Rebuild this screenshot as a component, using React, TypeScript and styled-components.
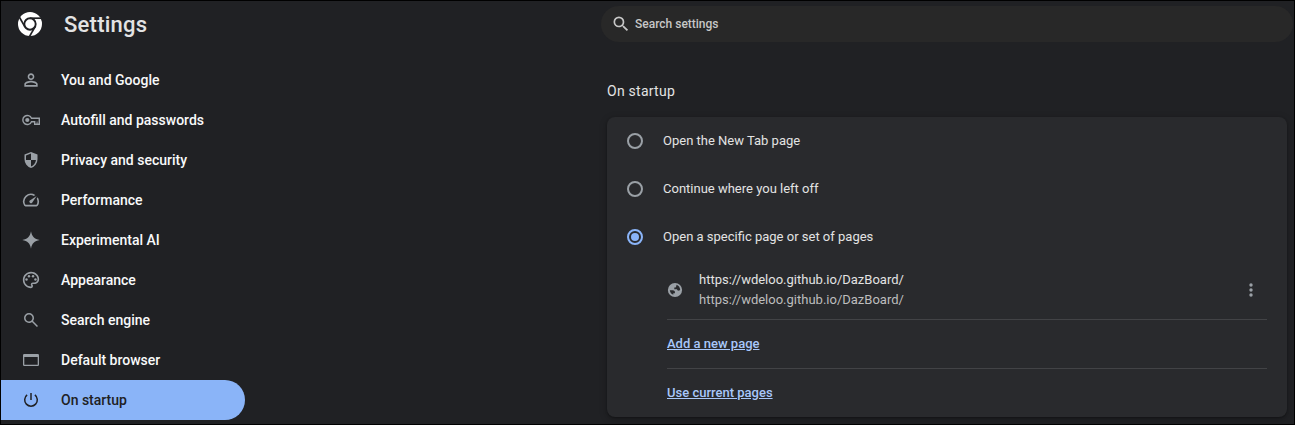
import React from "react";
import styled, { createGlobalStyle } from "styled-components";

const Global = createGlobalStyle`
  * { box-sizing: border-box; }
  body { margin: 0; background: #202124; font-family: Roboto, "Liberation Sans", sans-serif; }
`;

const Window = styled.div`
  display: flex;
  width: 1295px;
  height: 425px;
  border: 1px solid #000;
  background: #202124;
  color: #e3e3e3;
  overflow: hidden;
`;

const Sidebar = styled.aside`
  width: 266px;
  flex: none;
`;

const Brand = styled.header`
  display: flex;
  align-items: center;
  gap: 22px;
  height: 46px;
  padding-left: 17px;
  margin-bottom: 13px;
`;

const Title = styled.h1`
  margin: 0;
  padding-top: 2px;
  font-size: 22px;
  font-weight: 500;
  letter-spacing: 0.25px;
  line-height: 32px;
`;

const Nav = styled.nav`
  display: flex;
  flex-direction: column;
`;

const NavItem = styled.a<{ $active?: boolean }>`
  display: flex;
  align-items: center;
  gap: 20px;
  width: 244px;
  height: 40px;
  padding-left: 20px;
  border-radius: 0 20px 20px 0;
  font-size: 14px;
  font-weight: 500;
  color: ${(p) => (p.$active ? "#202124" : "#f8f9fa")};
  background: ${(p) => (p.$active ? "#8ab4f8" : "transparent")};
  svg { color: ${(p) => (p.$active ? "#202124" : "#9aa0a6")}; }
`;

const Icon = styled.svg<{ $size?: number }>`
  flex: none;
  display: block;
  width: ${(p) => p.$size ?? 20}px;
  height: ${(p) => p.$size ?? 20}px;
  fill: currentColor;
`;

const Main = styled.main`
  display: flex;
  flex-direction: column;
  width: 692px;
  margin-left: auto;
  margin-right: 1px;
`;

const SearchBar = styled.div`
  display: flex;
  align-items: center;
  gap: 4px;
  height: 36px;
  margin-top: 5px;
  padding-left: 10px;
  border-radius: 18px;
  background: #282828;
  color: #c7c7c7;
  font-size: 12px;
  font-weight: 500;
`;

const Section = styled.section`
  margin: 37px 6px 0;
`;

const SectionTitle = styled.h2`
  margin: 0 0 13px;
  font-size: 14px;
  font-weight: 400;
  letter-spacing: 0.25px;
  line-height: 25px;
`;

const Card = styled.div`
  height: 300px;
  border-radius: 8px;
  background: #292a2d;
  box-shadow: 0 1px 2px rgba(0, 0, 0, 0.3), 0 2px 6px 2px rgba(0, 0, 0, 0.15);
`;

const Option = styled.label`
  display: flex;
  align-items: center;
  gap: 20px;
  height: 48px;
  padding-left: 20px;
  font-size: 13px;
  color: #e3e3e3;
`;

const OptionText = styled.span`
  padding-bottom: 2px;
`;

const Radio = styled.span<{ $checked?: boolean }>`
  display: grid;
  place-items: center;
  width: 16px;
  height: 16px;
  border: 2px solid ${(p) => (p.$checked ? "#8ab4f8" : "#9aa0a6")};
  border-radius: 50%;
  &::after {
    content: "";
    width: 8px;
    height: 8px;
    border-radius: 50%;
    background: ${(p) => (p.$checked ? "#8ab4f8" : "transparent")};
  }
`;

const Pages = styled.div`
  margin: 0 20px 0 60px;
`;

const PageEntry = styled.div`
  display: flex;
  align-items: center;
  height: 58px;
  color: #9aa0a6;
`;

const PageText = styled.div`
  flex: 1;
  margin-left: 16px;
  font-size: 13px;
  line-height: 20px;
`;

const PageTitle = styled.div`
  color: #e3e3e3;
`;

const PageUrl = styled.div`
  color: #bdbdbd;
`;

const MenuButton = styled.span`
  display: flex;
  margin-right: 6px;
`;

const ActionRow = styled.div`
  display: flex;
  align-items: center;
  height: 49px;
  padding-bottom: 2px;
  border-top: 1px solid #424346;
`;

const ActionLink = styled.a`
  color: #a8c7fa;
  font-size: 13px;
  font-weight: 500;
  text-decoration: underline;
`;

const searchPath =
  "M765-144 526-383q-30 22-65.8 34.5-35.8 12.5-76.2 12.5Q284-336 214-406t-70-170q0-100 70-170t170-70q100 0 170 70t70 170q0 40.4-12.5 76.2Q599-464 577-434l239 239-51 51ZM384-408q70 0 119-49t49-119q0-70-49-119t-119-49q-70 0-119 49t-49 119q0 70 49 119t119 49Z";

const items: { label: string; viewBox?: string; art: React.ReactNode }[] = [
  {
    label: "You and Google",
    viewBox: "0 0 24 24",
    art: <path d="M12 5.9c1.16 0 2.1.94 2.1 2.1s-.94 2.1-2.1 2.1S9.9 9.16 9.9 8s.94-2.1 2.1-2.1m0 9c2.97 0 6.1 1.46 6.1 2.1v1.1H5.9V17c0-.64 3.13-2.1 6.1-2.1M12 4C9.79 4 8 5.79 8 8s1.79 4 4 4 4-1.79 4-4-1.79-4-4-4zm0 9c-2.67 0-8 1.34-8 4v3h16v-3c0-2.66-5.33-4-8-4z" />,
  },
  {
    label: "Autofill and passwords",
    art: (
      <>
        <path d="M10.5 8.3A4.500 4.500 0 1 0 10.5 11.700H13.700V14.200H18.300V8.300Z" fill="none" stroke="currentColor" strokeWidth="1.400" />
        <path d="M15.300 11.500H17V14.200H15.300Z" opacity=".5" />
        <circle cx="6.300" cy="10" r="2.100" />
      </>
    ),
  },
  {
    label: "Privacy and security",
    viewBox: "0 -960 960 960",
    art: <path d="M480-96q-135-33-223.5-152.8Q168-368.7 168-515v-229l312-120 312 120v229q0 146.3-88.5 266.2Q615-129 480-96Zm0-75q97-30 161.500-113T718-480H480v-307l-240 92v180q0 9 .5 17t1.500 18h238v309Z" />,
  },
  {
    label: "Performance",
    viewBox: "-.5 -.5 25 25",
    art: <path d="m20.38 8.57-1.23 1.85a8 8 0 0 1-.22 7.58H5.07A8 8 0 0 1 15.58 6.85l1.85-1.23A10 10 0 0 0 3.35 19a2 2 0 0 0 1.72 1h13.85a2 2 0 0 0 1.74-1 10 10 0 0 0-.27-10.44zm-9.79 6.84a2 2 0 0 0 2.83 0l5.66-8.49-8.49 5.66a2 2 0 0 0 0 2.83z" />,
  },
  {
    label: "Experimental AI",
    art: <path d="M10 1.300C10.900 6.600 13.400 9.100 18.700 10 13.400 10.900 10.900 13.400 10 18.700 9.100 13.400 6.600 10.900 1.300 10 6.600 9.100 9.100 6.600 10 1.300Z" />,
  },
  {
    label: "Appearance",
    viewBox: "-.3 -.3 24.600 24.600",
    art: (
      <>
        <path d="M12 22C6.490 22 2 17.510 2 12S6.490 2 12 2s10 4.040 10 9c0 3.310-2.690 6-6 6h-1.770c-.28 0-.5.22-.5.5 0 .12.050.23.130.33.410.470.640 1.060.640 1.670A2.500 2.500 0 0 1 12 22zm0-18c-4.410 0-8 3.590-8 8s3.590 8 8 8c.28 0 .5-.22.5-.5a.54.54 0 0 0-.14-.35c-.41-.46-.63-1.050-.63-1.650a2.500 2.500 0 0 1 2.500-2.500H16c2.210 0 4-1.790 4-4 0-3.860-3.590-7-8-7z" />
        <circle cx="6.5" cy="11.500" r="1.500" />
        <circle cx="9.5" cy="7.500" r="1.500" />
        <circle cx="14.5" cy="7.500" r="1.500" />
        <circle cx="17.5" cy="11.500" r="1.500" />
      </>
    ),
  },
  { label: "Search engine", viewBox: "0 -960 960 960", art: <path d={searchPath} /> },
  {
    label: "Default browser",
    art: <path fillRule="evenodd" d="M3.200 4H16.800Q18 4 18 5.200V14.800Q18 16 16.800 16H3.200Q2 16 2 14.800V5.200Q2 4 3.200 4ZM3.300 7V14.700H16.700V7Z" />,
  },
  {
    label: "On startup",
    art: <path d="M10 3V10M6.100 4.900A6.300 6.300 0 1 0 13.900 4.900" fill="none" stroke="currentColor" strokeWidth="1.5" />,
  },
];

function BrandLogo() {
  return (
    <Icon $size={24} viewBox="-12 -12 24 24">
      <circle r="12" fill="#fff" />
      <circle r="5.700" fill="#fff" stroke="#202124" strokeWidth="1.900" />
      {[0, 120, 240].map((a) => (
        <path key={a} d="M0-5.800H12" transform={`rotate(${a})`} stroke="#202124" strokeWidth="1.700" />
      ))}
    </Icon>
  );
}

export default function App() {
  return (
    <>
      <Global />
      <Window>
        <Sidebar>
          <Brand>
            <BrandLogo />
            <Title>Settings</Title>
          </Brand>
          <Nav>
            {items.map((item) => (
              <NavItem key={item.label} $active={item.label === "On startup"}>
                <Icon viewBox={item.viewBox ?? "0 0 20 20"}>{item.art}</Icon>
                {item.label}
              </NavItem>
            ))}
          </Nav>
        </Sidebar>
        <Main>
          <SearchBar>
            <Icon viewBox="0 0 24 24">
              <path d="M15.500 14h-.79l-.28-.27A6.470 6.470 0 0 0 16 9.500 6.500 6.500 0 1 0 9.500 16c1.610 0 3.090-.59 4.230-1.570l.27.28v.79l5 4.990L20.490 19l-4.990-5zm-6 0C7.010 14 5 11.990 5 9.500S7.010 5 9.500 5 14 7.010 14 9.500 11.990 14 9.500 14z" />
            </Icon>
            Search settings
          </SearchBar>
          <Section>
            <SectionTitle>On startup</SectionTitle>
            <Card>
              <Option><Radio /><OptionText>Open the New Tab page</OptionText></Option>
              <Option><Radio /><OptionText>Continue where you left off</OptionText></Option>
              <Option><Radio $checked /><OptionText>Open a specific page or set of pages</OptionText></Option>
              <Pages>
                <PageEntry>
                  <Icon $size={16} viewBox="0 0 16 16">
                    <circle cx="8" cy="8" r="7.100" />
                    <path d="M2.800 8.300H5.600Q8.300 8.600 7.900 10.800V11.300H6.300V12.800Q3.300 11.800 2.800 8.300ZM9.500 2.800Q12.700 4 13.200 7.700Q12.300 8.800 11.200 8.600Q10 8.300 10 7.200H7.300V5.500H8.600Q9.500 4.500 9.500 2.800Z" fill="#292a2d" />
                  </Icon>
                  <PageText>
                    <PageTitle>https://wdeloo.github.io/DazBoard/</PageTitle>
                    <PageUrl>https://wdeloo.github.io/DazBoard/</PageUrl>
                  </PageText>
                  <MenuButton>
                    <Icon viewBox="0 0 20 20">
                      <circle cx="10" cy="5" r="1.700" />
                      <circle cx="10" cy="10" r="1.700" />
                      <circle cx="10" cy="15" r="1.700" />
                    </Icon>
                  </MenuButton>
                </PageEntry>
                <ActionRow><ActionLink>Add a new page</ActionLink></ActionRow>
                <ActionRow><ActionLink>Use current pages</ActionLink></ActionRow>
              </Pages>
            </Card>
          </Section>
        </Main>
      </Window>
    </>
  );
}
